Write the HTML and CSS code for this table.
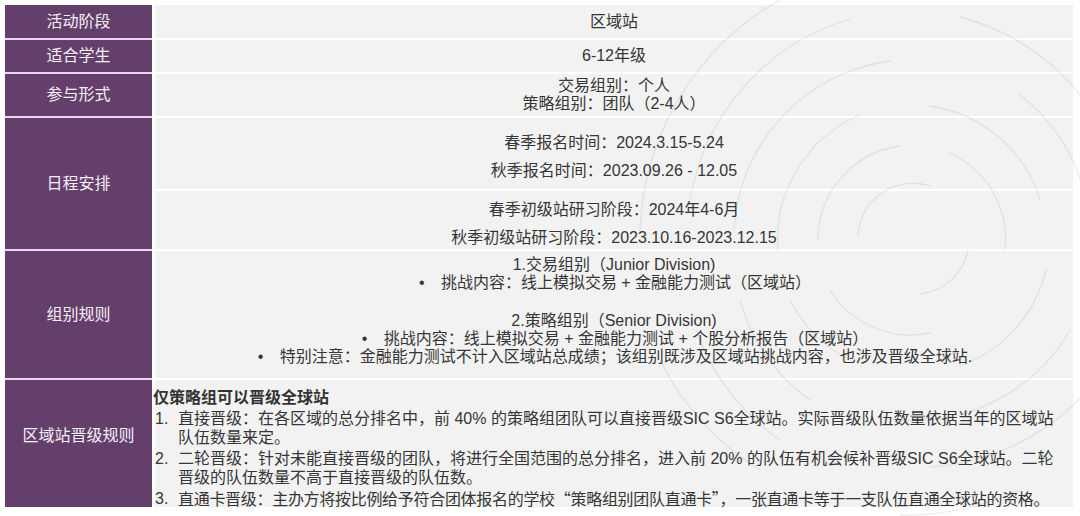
FILE: index.html
```html
<!DOCTYPE html>
<html lang="zh-CN">
<head>
<meta charset="utf-8">
<link rel="stylesheet" href="styles.css">
</head>
<body>
<div class="page">
  <div class="table">
    <div class="label r1">活动阶段</div>
    <div class="cell r1">区域站</div>

    <div class="label r2">适合学生</div>
    <div class="cell r2">6-12年级</div>

    <div class="label r3">参与形式</div>
    <div class="cell r3 tight">
      <div>交易组别：个人</div>
      <div>策略组别：团队（2-4人）</div>
    </div>

    <div class="label r4">日程安排</div>
    <div class="cell r4a loose">
      <div>春季报名时间：2024.3.15-5.24</div>
      <div>秋季报名时间：2023.09.26 - 12.05</div>
    </div>
    <div class="cell r4b loose">
      <div>春季初级站研习阶段：2024年4-6月</div>
      <div>秋季初级站研习阶段：2023.10.16-2023.12.15</div>
    </div>

    <div class="label r5">组别规则</div>
    <div class="cell r5 groups">
      <div>1.交易组别（Junior Division)</div>
      <div class="bullet"><span class="dot">•</span>挑战内容：线上模拟交易 + 金融能力测试（区域站）</div>
      <div class="blank"></div>
      <div>2.策略组别（Senior Division)</div>
      <div class="bullet"><span class="dot">•</span>挑战内容：线上模拟交易 + 金融能力测试 + 个股分析报告（区域站）</div>
      <div class="bullet"><span class="dot">•</span>特别注意：金融能力测试不计入区域站总成绩；该组别既涉及区域站挑战内容，也涉及晋级全球站.</div>
    </div>

    <div class="label r6 up">区域站晋级规则</div>
    <div class="cell r6 rules">
      <div class="rules-title">仅策略组可以晋级全球站</div>
      <div class="item"><span class="num">1.</span><span class="txt">直接晋级：在各区域的总分排名中，前 40% 的策略组团队可以直接晋级SIC S6全球站。实际晋级队伍数量依据当年的区域站<br>队伍数量来定。</span></div>
      <div class="item"><span class="num">2.</span><span class="txt">二轮晋级：针对未能直接晋级的团队，将进行全国范围的总分排名，进入前 20% 的队伍有机会候补晋级SIC S6全球站。二轮<br>晋级的队伍数量不高于直接晋级的队伍数。</span></div>
      <div class="item"><span class="num">3.</span><span class="txt last">直通卡晋级：主办方将按比例给予符合团体报名的学校<span class="q">“</span>策略组别团队直通卡<span class="q">”</span>，一张直通卡等于一支队伍直通全球站的资格。</span></div>
    </div>
  </div>

  <svg class="rings" width="480" height="516" viewBox="0 0 480 516" aria-hidden="true">
    <g fill="none" stroke="#000" stroke-opacity="0.075" stroke-width="1.3" stroke-linecap="round">
      <path d="M 258 235 A 55 55 0 0 1 330 186"/>
      <path d="M 368 250 A 55 55 0 0 1 320 294"/>
      <path d="M 218 240 A 95 95 0 0 1 300 146"/>
      <path d="M 350 153 A 95 95 0 0 1 405 250"/>
      <path d="M 330 333 A 95 95 0 0 1 230 290"/>
      <path d="M 178 250 A 135 135 0 0 1 260 115"/>
      <path d="M 330 106 A 135 135 0 0 1 440 200"/>
      <path d="M 446 270 A 135 135 0 0 1 360 366"/>
      <path d="M 250 360 A 135 135 0 0 1 190 300"/>
      <path d="M 134 230 A 180 180 0 0 1 290 61"/>
      <path d="M 420 95 A 180 180 0 0 1 490 230"/>
      <path d="M 470 330 A 180 180 0 0 1 300 420"/>
      <path d="M 210 400 A 180 180 0 0 1 140 300"/>
      <path d="M 90 200 A 228 228 0 0 1 250 19"/>
      <path d="M 360 17 A 228 228 0 0 1 520 170"/>
      <path d="M 510 360 A 228 228 0 0 1 330 467"/>
      <path d="M 180 440 A 228 228 0 0 1 96 330"/>
      <path d="M 40 230 A 275 275 0 0 1 200 -10"/>
      <path d="M 160 470 A 275 275 0 0 1 60 360"/>
      <path d="M 420 490 A 275 275 0 0 1 300 515"/>
    </g>
  </svg>
</div>
</body>
</html>
```

FILE: styles.css
```css
* {
  box-sizing: border-box;
}

html, body {
  margin: 0;
  padding: 0;
  background: #ffffff;
}

body {
  width: 1080px;
  height: 516px;
  overflow: hidden;
  font-family: "Liberation Sans", "Noto Sans CJK SC", sans-serif;
  font-size: 16px;
  color: #363636;
}

.page {
  position: relative;
  width: 1080px;
  height: 516px;
  padding: 5px 0 0 5px;
}

.table {
  display: grid;
  grid-template-columns: 147px 918px;
  grid-template-rows: 33px 32px 42px 71px 58px 127px 127px;
  column-gap: 3px;
  row-gap: 2px;
  width: 1068px;
  background: linear-gradient(to right, #ead8ee 147px, #ffffff 147px);
}

.label {
  grid-column: 1;
  background: #643f6b;
  color: #f6eef7;
  display: flex;
  align-items: center;
  justify-content: center;
  line-height: 18px;
}

.label.r1 { grid-row: 1; }
.label.r2 { grid-row: 2; }
.label.r3 { grid-row: 3; }
.label.r4 { grid-row: 4 / 6; }
.label.r5 { grid-row: 6; }
.label.r6 { grid-row: 7; }

.label.up {
  padding-bottom: 15px;
}

.cell {
  grid-column: 2;
  background: #f2f2f2;
  display: flex;
  flex-direction: column;
  align-items: center;
  justify-content: center;
  text-align: center;
  line-height: 18px;
  white-space: nowrap;
}

.cell.r1 { grid-row: 1; }
.cell.r2 { grid-row: 2; }
.cell.r3 { grid-row: 3; }
.cell.r4a { grid-row: 4; }
.cell.r4b { grid-row: 5; }
.cell.r5 { grid-row: 6; }
.cell.r6 { grid-row: 7; }

.cell.loose {
  line-height: 28px;
  padding-top: 7px;
}

.groups {
  justify-content: flex-start;
  padding-top: 5px;
}

.blank {
  height: 20px;
}

.bullet .dot {
  display: inline-block;
  width: 24px;
  text-align: left;
  padding-left: 2px;
}

.rules {
  align-items: stretch;
  justify-content: flex-start;
  text-align: left;
  padding-top: 8px;
  line-height: 19px;
}

.rules-title {
  font-weight: 700;
  color: #333333;
  margin-left: -2px;
}

.item {
  display: flex;
  margin-top: 2px;
}

.item:first-of-type {
  margin-top: 0;
}

.item .num {
  flex: 0 0 23px;
}

.item .txt {
  flex: 1;
}

.q {
  font-family: "Noto Sans CJK SC", sans-serif;
  font-feature-settings: "fwid";
}

.txt.last {
  letter-spacing: -0.3px;
}

.rings {
  position: absolute;
  left: 600px;
  top: 0;
  pointer-events: none;
  overflow: visible;
}
```
